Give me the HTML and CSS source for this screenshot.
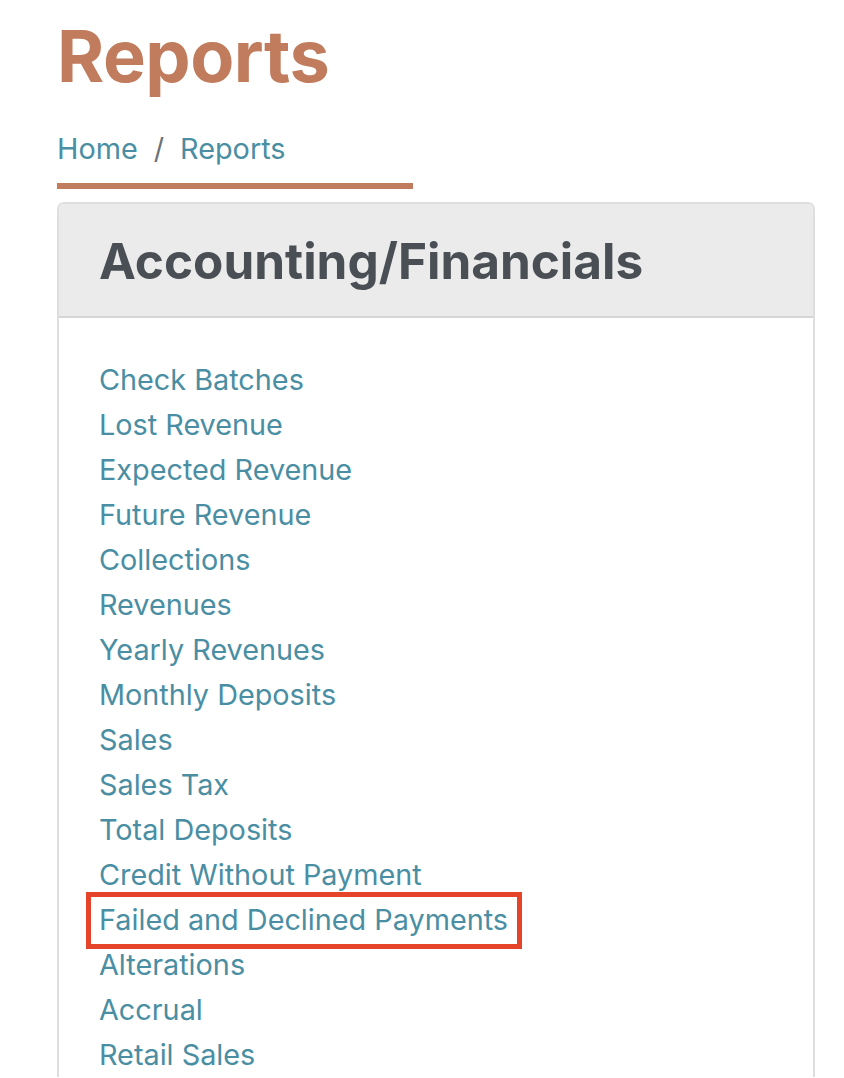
FILE: index.html
```html
<!DOCTYPE html>
<html lang="en">
<head>
  <meta charset="UTF-8">
  <meta name="viewport" content="width=device-width, initial-scale=1.0">
  <title>Reports</title>
  <link rel="stylesheet" href="styles.css">
</head>

<body>
  <div class="page">
    <h1 class="title">Reports</h1>
    <nav class="breadcrumb">
      <a href="#">Home</a>
      <span class="sep">/</span>
      <a href="#">Reports</a>
    </nav>

    <div class="card">
      <div class="card-header">Accounting/Financials</div>
      <ul class="report-list">
        <li><a href="#">Check Batches</a></li>
        <li><a href="#">Lost Revenue</a></li>
        <li><a href="#">Expected Revenue</a></li>
        <li><a href="#">Future Revenue</a></li>
        <li><a href="#">Collections</a></li>
        <li><a href="#">Revenues</a></li>
        <li><a href="#">Yearly Revenues</a></li>
        <li><a href="#">Monthly Deposits</a></li>
        <li><a href="#">Sales</a></li>
        <li><a href="#">Sales Tax</a></li>
        <li><a href="#">Total Deposits</a></li>
        <li><a href="#">Credit Without Payment</a></li>
        <li><a href="#" class="highlight">Failed and Declined Payments</a></li>
        <li><a href="#">Alterations</a></li>
        <li><a href="#">Accrual</a></li>
        <li><a href="#">Retail Sales</a></li>
      </ul>
    </div>
  </div>
</body>
</html>
```

FILE: styles.css
```css
body {
  margin: 0;
  background: #fff;
  font-family: Inter, "Noto Sans", sans-serif;
  color: #4a4f55;
}

.page {
  padding: 0 29px 0 57px;
}

.title {
  margin: 0;
  padding-top: 14px;
  font-size: 72px;
  font-weight: 700;
  line-height: 84px;
  letter-spacing: -0.5px;
  color: #c07c5d;
}

.breadcrumb {
  display: flex;
  gap: 16px;
  width: 356px;
  margin-top: 31px;
  padding-bottom: 14px;
  border-bottom: 6px solid #c07c5d;
  font-size: 28.8px;
  line-height: 40px;
}

.breadcrumb a {
  color: #4a8ea3;
  text-decoration: none;
}

.breadcrumb .sep {
  color: #6c727a;
}

.card {
  margin-top: 13px;
  border: 2px solid #dedede;
  border-bottom: none;
  border-radius: 7px 7px 0 0;
}

.card-header {
  background: #ebebeb;
  border-bottom: 2px solid #d6d6d6;
  border-radius: 5px 5px 0 0;
  padding: 26px 40px 24px;
  font-size: 49.5px;
  font-weight: 700;
  line-height: 62px;
  color: #4a4f55;
}

.report-list {
  list-style: none;
  margin: 0;
  padding: 39px 40px 0;
}

.report-list li {
  font-size: 28.8px;
  line-height: 45px;
}

.report-list a {
  color: #4a8ea3;
  text-decoration: none;
}

/* annotation box drawn over the highlighted report */
.report-list a.highlight {
  display: inline-block;
  position: relative;
  vertical-align: top;
}

.report-list a.highlight::after {
  content: "";
  position: absolute;
  top: -5px;
  bottom: -7px;
  left: -13px;
  right: -14px;
  border: 5px solid #e5432a;
}
```
